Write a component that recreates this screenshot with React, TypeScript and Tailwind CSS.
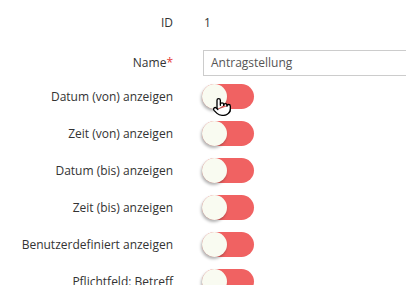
import React from 'react';
import { Pointer } from 'lucide-react';

const toggles = [
  'Datum (von) anzeigen',
  'Zeit (von) anzeigen',
  'Datum (bis) anzeigen',
  'Zeit (bis) anzeigen',
  'Benutzerdefiniert anzeigen',
  'Pflichtfeld: Betreff',
];

const Switch = () => (
  <div className="relative w-[52px] h-[25px] rounded-full bg-[#f06262]">
    <div className="absolute left-0 top-0 w-[25px] h-[25px] rounded-full bg-[#f9fbf1] shadow-[-1px_2px_3px_rgba(0,0,0,0.3)]" />
  </div>
);

export default function App() {
  return (
    <div className="relative w-[406px] h-[285px] overflow-hidden bg-white text-[12px] text-[#333]" style={{ fontFamily: '"Open Sans", sans-serif' }}>
      <div className="flex flex-col pt-[13px]">
        <div className="flex items-center h-[20px]">
          <div className="w-[173px] shrink-0 text-right">ID</div>
          <div className="ml-[31px]">1</div>
        </div>
        <div className="flex items-center h-[26px] mt-[17px]">
          <div className="w-[173px] shrink-0 text-right">Name<span className="text-[#e53935]">*</span></div>
          <div className="ml-[30px] w-[220px] h-[26px] border border-[#ccc] flex items-center px-[7px] text-[#555] shrink-0">Antragstellung</div>
        </div>
        <div className="flex flex-col gap-[12px] mt-[8px]">
          {toggles.map((t) => (
            <div key={t} className="flex items-center h-[25px]">
              <div className="w-[173px] shrink-0 text-right">{t}</div>
              <div className="ml-[29px]"><Switch /></div>
            </div>
          ))}
        </div>
      </div>
      <div className="absolute left-[212px] top-[97px]">
        <Pointer size={20} strokeWidth={1.6} className="text-black fill-white" />
      </div>
    </div>
  );
}
